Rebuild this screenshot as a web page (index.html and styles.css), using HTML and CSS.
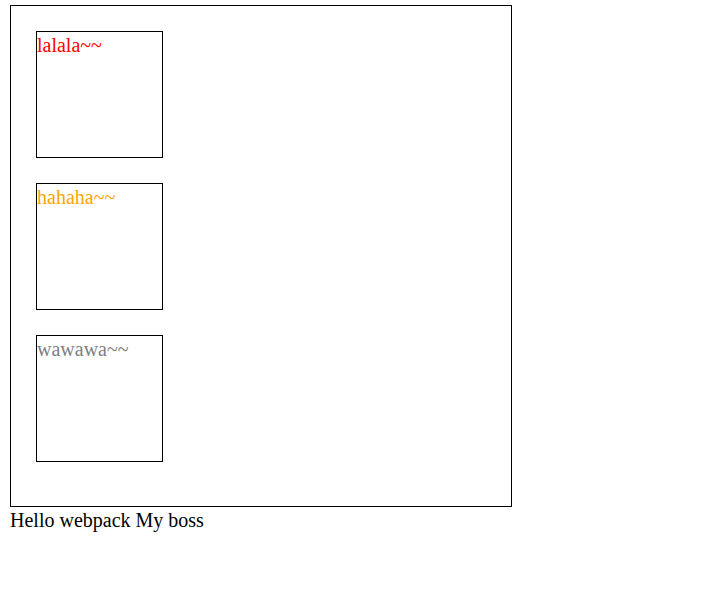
FILE: index.html
```html
<!DOCTYPE html>
<html>
<head>
<meta charset="utf-8">
<link rel="stylesheet" href="styles.css">
</head>
<body>
<div class="wrap">
  <div class="box red">lalala~~</div>
  <div class="box orange">hahaha~~</div>
  <div class="box gray">wawawa~~</div>
</div>
<div class="hello">Hello webpack My boss</div>
</body>
</html>
```
FILE: styles.css
```css
body {
  margin: 5px 10px;
  font-family: "Liberation Serif", serif;
  font-size: 20px;
  line-height: 26px;
  color: #000;
}
.wrap {
  width: 450px;
  height: 450px;
  padding: 25px 25px 25px 25px;
  border: 1px solid #000;
  display: flex;
  flex-direction: column;
  gap: 25px;
}
.box {
  width: 125px;
  height: 125px;
  border: 1px solid #000;
  flex: none;
}
.red { color: red; }
.orange { color: orange; }
.gray { color: gray; }
```
